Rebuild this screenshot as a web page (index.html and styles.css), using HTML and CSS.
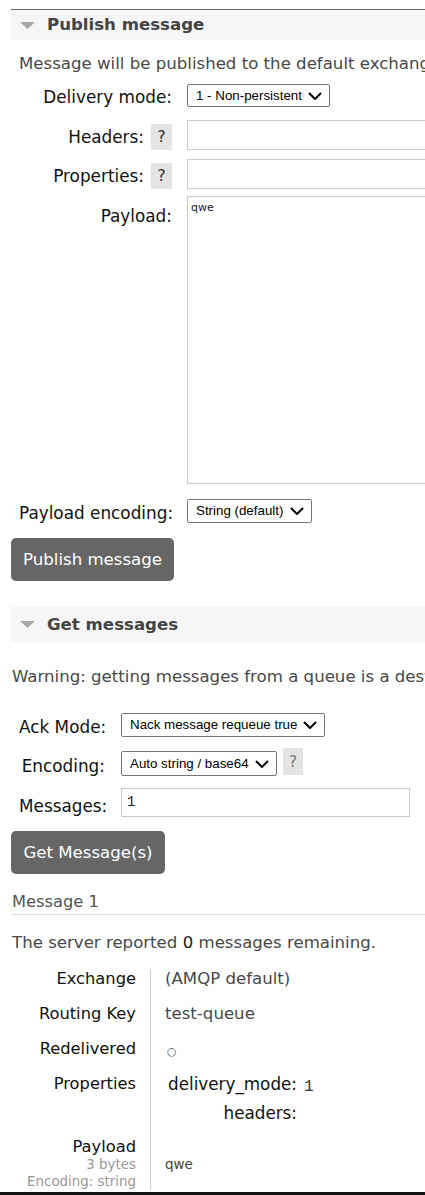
FILE: index.html
```html
<!DOCTYPE html>
<html lang="en">
<head>
<meta charset="utf-8">
<title>Queue test-queue</title>
<link rel="stylesheet" href="styles.css">
</head>
<body>
<div class="page">
  <div class="topline"></div>

  <section class="sec">
    <div class="sec-head">
      <svg class="tri" width="15" height="7" viewBox="0 0 15 7"><polygon points="0,0 15,0 7.5,7" fill="#a8a8a8"/></svg>
      <h2>Publish message</h2>
    </div>
    <p class="intro">Message will be published to the default exchange with routing key <b>test-queue</b>, routing it to this queue.</p>

    <div class="form pub">
      <div class="row r-mode">
        <div class="lbl">Delivery mode:</div>
        <span class="sel s-mode"><span>1 - Non-persistent</span><svg width="14" height="8" viewBox="0 0 14 8"><path d="M1 1 L7 7 L13 1" fill="none" stroke="#000" stroke-width="2"/></svg></span>
      </div>
      <div class="row r-box">
        <div class="lbl lbl-help">Headers: <span class="help">?</span></div>
        <input class="txt wide" type="text">
      </div>
      <div class="row r-box r-prop">
        <div class="lbl lbl-help">Properties: <span class="help">?</span></div>
        <input class="txt wide" type="text">
      </div>
      <div class="row r-payload">
        <div class="lbl">Payload:</div>
        <div class="area">qwe</div>
      </div>
      <div class="row r-enc">
        <div class="lbl">Payload encoding:</div>
        <span class="sel s-enc"><span>String (default)</span><svg width="14" height="8" viewBox="0 0 14 8"><path d="M1 1 L7 7 L13 1" fill="none" stroke="#000" stroke-width="2"/></svg></span>
      </div>
    </div>
    <button class="btn btn-pub" type="button">Publish message</button>
  </section>

  <section class="sec sec-get">
    <div class="sec-head tall">
      <svg class="tri" width="15" height="7" viewBox="0 0 15 7"><polygon points="0,0 15,0 7.5,7" fill="#a8a8a8"/></svg>
      <h2>Get messages</h2>
    </div>
    <p class="warn">Warning: getting messages from a queue is a destructive action.</p>

    <div class="form get">
      <div class="row g-ack">
        <div class="lbl">Ack Mode:</div>
        <span class="sel s-ack"><span>Nack message requeue true</span><svg width="14" height="8" viewBox="0 0 14 8"><path d="M1 1 L7 7 L13 1" fill="none" stroke="#000" stroke-width="2"/></svg></span>
      </div>
      <div class="row g-enc">
        <div class="lbl">Encoding:</div>
        <span class="sel s-genc"><span>Auto string / base64</span><svg width="14" height="8" viewBox="0 0 14 8"><path d="M1 1 L7 7 L13 1" fill="none" stroke="#000" stroke-width="2"/></svg></span>
        <span class="help help-light">?</span>
      </div>
      <div class="row g-msg">
        <div class="lbl">Messages:</div>
        <div class="num">1</div>
      </div>
    </div>
    <button class="btn btn-get" type="button">Get Message(s)</button>

    <h3 class="msg-title">Message 1</h3>
    <p class="remain">The server reported <span class="dark">0</span> messages remaining.</p>

    <div class="mtable">
      <div class="k">Exchange</div><div class="v">(AMQP default)</div>
      <div class="k">Routing Key</div><div class="v">test-queue</div>
      <div class="k">Redelivered</div><div class="v"><span class="circ">○</span></div>
      <div class="k">Properties</div>
      <div class="v">
        <div class="props">
          <div class="pk">delivery_mode:</div><div class="pv">1</div>
          <div class="pk">headers:</div><div class="pv"></div>
        </div>
      </div>
      <div class="k k-pay">Payload<div class="sub">3 bytes</div><div class="sub">Encoding: string</div></div>
      <div class="v v-pay">qwe</div>
    </div>
  </section>
</div>
<div class="bottombar"></div>
</body>
</html>
```

FILE: styles.css
```css
html, body {
  margin: 0;
  padding: 0;
  background: #fff;
}
body {
  width: 425px;
  height: 1195px;
  overflow: hidden;
  font-family: "DejaVu Sans", Verdana, sans-serif;
  font-size: 16.6px;
  color: #484848;
  position: relative;
}
.page {
  width: 520px;
  padding: 9px 0 0 11px;
}
.topline {
  height: 1px;
  background: #6a6a6a;
}
.sec-head {
  height: 30px;
  background: #f6f6f6;
  display: flex;
  align-items: center;
  padding-left: 9px;
}
.sec-head.tall {
  height: 35px;
}
.tri {
  margin-right: 12px;
  flex: none;
}
.sec-head h2 {
  margin: 0;
  font-size: 16.6px;
  font-weight: bold;
  color: #444;
  line-height: 20px;
}
.intro, .warn, .remain {
  margin: 14px 0 0 8px;
  line-height: 20px;
  white-space: nowrap;
}
.intro b {
  font-weight: normal;
}
.form {
  padding-left: 8px;
}
.row {
  display: flex;
  align-items: flex-start;
}
.lbl {
  color: #111;
  font-size: 16.85px;
  line-height: 20px;
  text-align: right;
  white-space: nowrap;
  flex: none;
}
.pub .lbl {
  width: 153px;
  margin-right: 15px;
}
.get .lbl {
  width: 86px;
  margin-right: 16px;
}
.lbl-help {
  display: flex;
  justify-content: flex-end;
  align-items: center;
  gap: 7px;
  height: 26px;
  margin-top: 4px;
}
.help {
  display: inline-flex;
  align-items: center;
  justify-content: center;
  width: 21px;
  height: 26px;
  background: #e4e4e4;
  color: #333;
  font-size: 16px;
  line-height: 20px;
}
.help-light {
  color: #777;
  height: 27px;
  width: 20px;
  margin-left: 6px;
}
.sel {
  display: inline-flex;
  align-items: center;
  justify-content: space-between;
  box-sizing: border-box;
  border: 1px solid #767676;
  border-radius: 2px;
  background: #fff;
  font-family: "Liberation Sans", Arial, sans-serif;
  font-size: 13.33px;
  color: #000;
  padding: 0 7px 1px 8px;
  flex: none;
}
.sel svg {
  flex: none;
  margin-top: 1px;
}
.txt, .area, .num {
  box-sizing: border-box;
  border: 1px solid #cbcbcb;
  background: #fff;
  margin: 0;
  flex: none;
}
.wide {
  width: 320px;
  height: 30px;
}

/* publish rows */
.r-mode { margin-top: 10px; }
.r-mode .lbl { margin-top: 3px; }
.s-mode { width: 143px; height: 23px; }
.r-box { margin-top: 13px; }
.r-prop { margin-top: 9px; }
.r-payload { margin-top: 7px; }
.r-payload .lbl { margin-top: 10px; }
.area {
  width: 320px;
  height: 288px;
  font-size: 11px;
  color: #222;
  padding: 4px 3px;
  line-height: 14px;
}
.r-enc { margin-top: 15px; }
.r-enc .lbl { margin-top: 4px; }
.s-enc { width: 125px; height: 24px; }

.btn {
  display: block;
  height: 43px;
  border: 0;
  border-radius: 5px;
  background: #666;
  color: #fff;
  font-family: "DejaVu Sans", Verdana, sans-serif;
  font-size: 16.6px;
  padding: 0 12px;
  margin: 15px 0 0 0;
  line-height: 43px;
}
.btn-pub { width: 163px; }

/* get messages */
.sec-get { margin-top: 26px; }
.warn { margin: 25px 0 0 1px; }
.g-ack { margin-top: 26px; }
.g-ack .lbl { margin-top: 4px; }
.s-ack { width: 204px; height: 24px; }
.g-enc { margin-top: 11px; }
.g-enc .lbl { margin-top: 8px; }
.s-genc { width: 156px; height: 25px; margin-top: 3px; }
.g-msg { margin-top: 12px; }
.g-msg .lbl { margin-top: 8px; }
.num {
  width: 289px;
  height: 29px;
  font-family: "Liberation Mono", "Courier New", monospace;
  font-size: 14px;
  color: #222;
  padding: 4px 5px;
  line-height: 18px;
}
.btn-get { width: 154px; margin-top: 14px; }

.msg-title {
  margin: 18px 0 0 0;
  padding: 0 0 2px 1px;
  font-size: 16.3px;
  font-weight: normal;
  line-height: 20px;
  color: #555;
  border-bottom: 1px solid #ddd;
}
.remain { margin: 18px 0 0 1px; }
.remain .dark { color: #222; }

.mtable {
  display: grid;
  grid-template-columns: 139px 1fr;
  margin-top: 16px;
}
.k {
  color: #111;
  font-size: 16.3px;
  line-height: 20px;
  height: 20px;
  text-align: right;
  padding: 0 14px 15px 0;
  white-space: nowrap;
}
.v {
  border-left: 1px solid #ccc;
  padding: 0 0 15px 14px;
  line-height: 20px;
  white-space: nowrap;
}
.circ {
  display: inline-block;
  font-size: 11px;
  line-height: 20px;
  height: 20px;
  color: #555;
  padding-top: 3px;
  box-sizing: border-box;
  vertical-align: top;
  margin-left: 2px;
}
.props {
  display: grid;
  grid-template-columns: auto auto;
  justify-content: start;
  column-gap: 7px;
  row-gap: 9px;
  padding-left: 3px;
}
.pk {
  color: #111;
  font-size: 16.8px;
  text-align: right;
  line-height: 20px;
  height: 20px;
}
.pv {
  font-family: "Liberation Mono", "Courier New", monospace;
  font-size: 16px;
  color: #333;
  line-height: 20px;
  height: 20px;
  padding-top: 3px;
  box-sizing: border-box;
  overflow: visible;
}
.k-pay {
  line-height: 18px;
  height: auto;
  padding-bottom: 0;
}
.sub {
  font-size: 13.4px;
  line-height: 17px;
  color: #999;
}
.v-pay {
  display: flex;
  align-items: center;
  padding-bottom: 0;
  font-size: 13.5px;
  color: #444;
}
.bottombar {
  position: absolute;
  left: 0;
  right: 0;
  bottom: 0;
  height: 3px;
  background: #111;
}
```
